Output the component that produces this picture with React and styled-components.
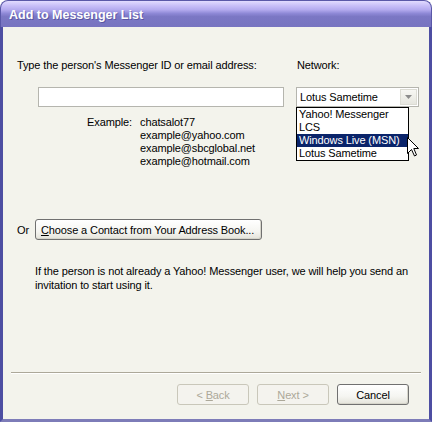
import React from 'react';
import styled, { createGlobalStyle } from 'styled-components';

const GlobalStyle = createGlobalStyle`
  html, body {
    margin: 0;
    padding: 0;
    background: #ffffff;
  }
  body {
    font-family: "Liberation Sans", Arial, sans-serif;
    font-size: 11px;
    letter-spacing: -0.12px;
    color: #000000;
  }
`;

const networks = ['Yahoo! Messenger', 'LCS', 'Windows Live (MSN)', 'Lotus Sametime'];
const examples = ['chatsalot77', 'example@yahoo.com', 'example@sbcglobal.net', 'example@hotmail.com'];

const AddToListDialog = () => {
  return (
    <Window>
      <TitleBar>Add to Messenger List</TitleBar>
      <Frame>
        <Body>
          <Form>
            <Label>Type the person's Messenger ID or email address:</Label>
            <Label $indent={1}>Network:</Label>
            <IdInput />
            <SelectWrap>
              <Select>
                <span>Lotus Sametime</span>
                <ArrowButton>
                  <svg width='7' height='4' viewBox='0 0 7 4'>
                    <path d='M0 0 H7 L3.5 4 Z' fill='#8c8c8c' />
                  </svg>
                </ArrowButton>
              </Select>
              <DropList>
                {networks.map((n, i) => (
                  <Option key={n} $active={i === 2}>
                    {n}
                  </Option>
                ))}
                <Cursor width='12' height='20' viewBox='0 0 12 20'>
                  <path
                    d='M0.5 0.5 V16.5 L4.5 12.5 L7.5 19 L9.5 18 L6.8 11.5 H11.5 Z'
                    fill='#ffffff'
                    stroke='#000000'
                    strokeWidth='1'
                    strokeLinejoin='miter'
                  />
                </Cursor>
              </DropList>
            </SelectWrap>
            <Examples>
              <ExampleLabel>Example:</ExampleLabel>
              <ExampleList>
                {examples.map((e) => (
                  <div key={e}>{e}</div>
                ))}
              </ExampleList>
            </Examples>
          </Form>

          <OrRow>
            <span>Or</span>
            <Button $wide>
              <u>C</u>hoose a Contact from Your Address Book...
            </Button>
          </OrRow>

          <Note>
            If the person is not already a Yahoo! Messenger user, we will help you send an
            <br />
            invitation to start using it.
          </Note>

          <Spacer />
          <Separator />
          <Footer>
            <Button disabled>
              &lt; <u>B</u>ack
            </Button>
            <Button disabled>
              <u>N</u>ext &gt;
            </Button>
            <Button>Cancel</Button>
          </Footer>
        </Body>
      </Frame>
    </Window>
  );
};

const Window = styled.div`
  width: 432px;
  height: 422px;
  display: flex;
  flex-direction: column;
  overflow: hidden;
`;

const TitleBar = styled.div`
  height: 27px;
  flex: none;
  box-sizing: border-box;
  padding: 2px 0 0 8px;
  display: flex;
  align-items: center;
  border-radius: 8px 8px 0 0;
  border: 1px solid #5a58a8;
  border-bottom: none;
  background: linear-gradient(
    to bottom,
    #e2dcff 0%,
    #c8bff8 18%,
    #b3aaee 34%,
    #8e88d6 48%,
    #7b77c4 60%,
    #7774c0 100%
  );
  color: #ffffff;
  font-family: "Liberation Sans", Arial, sans-serif;
  font-weight: bold;
  font-size: 12.5px;
  letter-spacing: 0;
  text-shadow: 1px 1px 0 rgba(60, 56, 130, 0.5);
`;

const Frame = styled.div`
  flex: 1;
  display: flex;
  border: 3px solid #4d4ea2;
  border-top: none;
  border-bottom-color: #7d7cb8;
`;

const Body = styled.div`
  flex: 1;
  display: flex;
  flex-direction: column;
  background: #f3f3ec;
  padding: 0 8px 14px 14px;
`;

const Form = styled.div`
  display: grid;
  grid-template-columns: 279px 123px;
  grid-template-rows: 13px 20px auto;
  row-gap: 15px;
  margin-top: 32px;
  line-height: 13px;
`;

const Label = styled.div`
  padding-left: ${(p) => p.$indent || 0}px;
  white-space: nowrap;
`;

const IdInput = styled.div`
  margin-left: 21px;
  width: 246px;
  height: 20px;
  box-sizing: border-box;
  background: #ffffff;
  border: 1px solid #b5b5ae;
`;

const SelectWrap = styled.div`
  position: relative;
  height: 20px;
`;

const Select = styled.div`
  height: 20px;
  box-sizing: border-box;
  background: #ffffff;
  border: 1px solid #b5b5ae;
  display: flex;
  align-items: center;
  justify-content: space-between;
  padding: 0 1px 0 3px;
`;

const ArrowButton = styled.div`
  width: 17px;
  height: 16px;
  display: flex;
  align-items: center;
  justify-content: center;
  background: linear-gradient(to bottom, #f7f7f3, #e6e6df);
  border: 1px solid #dcdcd4;
  box-sizing: border-box;
`;

const DropList = styled.div`
  position: absolute;
  top: 20px;
  left: 0;
  width: 113px;
  box-sizing: border-box;
  background: #ffffff;
  border: 1px solid #000000;
  z-index: 2;
`;

const Option = styled.div`
  height: 13px;
  line-height: 13px;
  padding-left: 2px;
  white-space: nowrap;
  background: ${(p) => (p.$active ? '#0a246a' : 'transparent')};
  color: ${(p) => (p.$active ? '#ffffff' : '#000000')};
`;

const Cursor = styled.svg`
  position: absolute;
  left: 110px;
  top: 29px;
`;

const Examples = styled.div`
  grid-column: 1;
  display: flex;
  gap: 8px;
  margin-top: -6px;
`;

const ExampleLabel = styled.div`
  width: 115px;
  text-align: right;
`;

const ExampleList = styled.div`
  display: flex;
  flex-direction: column;
`;

const OrRow = styled.div`
  display: flex;
  align-items: center;
  gap: 6px;
  margin-top: 51px;
`;

const Button = styled.button`
  width: ${(p) => (p.$wide ? '227px' : '72px')};
  height: 21px;
  padding: 0 5px;
  box-sizing: border-box;
  font-family: inherit;
  font-size: 11px;
  letter-spacing: inherit;
  text-align: ${(p) => (p.$wide ? 'left' : 'center')};
  white-space: nowrap;
  border-radius: 3px;
  border: 1px solid #707070;
  background: linear-gradient(to bottom, #ffffff 0%, #f5f5f1 60%, #e4e3da 100%);
  box-shadow: inset -1px -1px 0 #d6d5cb;
  color: #000000;

  &:disabled {
    border-color: #c9c7ba;
    background: #f4f3ee;
    box-shadow: none;
    color: #aca899;
  }
`;

const Note = styled.p`
  margin: 24px 0 0 18px;
  line-height: 14px;
`;

const Spacer = styled.div`
  flex: 1;
`;

const Separator = styled.div`
  margin: 0 0 0 -6px;
  width: 410px;
  border-top: 1px solid #aca899;
  border-bottom: 1px solid #ffffff;
`;

const Footer = styled.div`
  display: flex;
  justify-content: flex-end;
  gap: 8px;
  margin-top: 10px;
  padding-right: 12px;
`;

const App = () => (
  <>
    <GlobalStyle />
    <AddToListDialog />
  </>
);

export default App;
